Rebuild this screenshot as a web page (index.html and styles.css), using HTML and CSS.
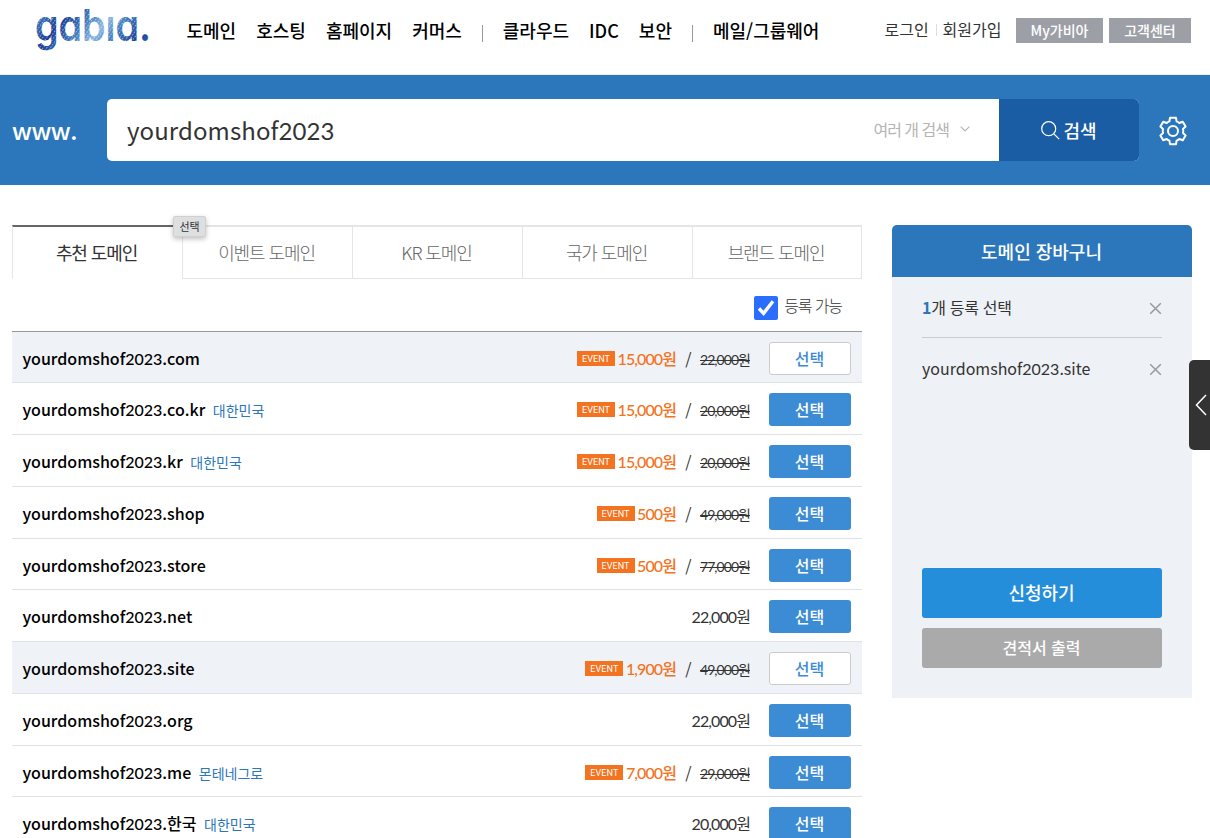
FILE: index.html
```html
<!DOCTYPE html>
<html lang="ko">
<head>
    <meta charset="UTF-8">
    <meta name="viewport" content="width=device-width, initial-scale=1.0">
    <title>도메인 검색</title>
    <link rel="stylesheet" href="styles.css">
</head>
<body>

<header class="header">
    <a class="logo" href="#">
        <svg width="120" height="56" viewBox="0 0 120 56">
            <defs>
                <linearGradient id="logoBlue" x1="0" y1="0" x2="28" y2="22" gradientUnits="userSpaceOnUse" spreadMethod="reflect">
                    <stop offset="0" stop-color="#8bb9e2"/>
                    <stop offset="0.45" stop-color="#3d78bd"/>
                    <stop offset="1" stop-color="#1c3f94"/>
                </linearGradient>
                <pattern id="logoDots" width="3" height="3" patternUnits="userSpaceOnUse" patternTransform="rotate(35)">
                    <rect width="1" height="1.4" fill="#fff" opacity="0.6"/>
                </pattern>
            </defs>
            <text class="logo-text" x="3" y="41" textLength="116" lengthAdjust="spacingAndGlyphs" fill="url(#logoBlue)">gabıa.</text>
            <rect width="108" height="56" fill="url(#logoDots)"/>
        </svg>
    </a>
    <nav class="nav">
        <a href="#">도메인</a>
        <a href="#">호스팅</a>
        <a href="#">홈페이지</a>
        <a href="#">커머스</a>
        <span class="nav-bar"></span>
        <a href="#">클라우드</a>
        <a href="#">IDC</a>
        <a href="#">보안</a>
        <span class="nav-bar"></span>
        <a href="#">메일/그룹웨어</a>
    </nav>
    <div class="util">
        <a href="#">로그인</a>
        <span class="util-bar"></span>
        <a href="#">회원가입</a>
        <a class="util-btn my" href="#">My가비아</a>
        <a class="util-btn" href="#">고객센터</a>
    </div>
</header>

<section class="search">
    <span class="www">www.</span>
    <form class="search-form">
        <div class="search-value">yourdomshof<span class="num">2023</span></div>
        <div class="multi">여러 개 검색
            <svg width="10" height="6" viewBox="0 0 10 6" fill="none" stroke="#b5b5b5" stroke-width="1.1"><path d="M.6.6 5 5 9.4.6"/></svg>
        </div>
        <button type="button" class="search-btn">
            <svg width="19" height="19" viewBox="0 0 19 19" fill="none" stroke="#fff" stroke-width="1.2"><circle cx="7.7" cy="7.7" r="7"/><path d="m12.8 12.8 5.4 5.4"/></svg>
            검색
        </button>
    </form>
    <svg class="gear" width="28" height="30" viewBox="0 0 28 30" fill="none" stroke="#fff" stroke-width="2" stroke-linejoin="round">
        <path d="M11 1.800h6l.6 3.600q1.400.4 2.700 1.600l3.500-1.200 2.800 4.800-2.600 2.300q.6 2.100 0 4.200l2.600 2.300-2.800 4.800-3.500-1.200q-1.300 1.200-2.700 1.600l-.6 3.600h-6l-.6-3.600Q9 24.200 7.700 23l-3.500 1.200-2.800-4.800L4 17.100q-.6-2.100 0-4.200l-2.600-2.300 2.800-4.800L7.700 7Q9 5.800 10.400 5.400z"/>
        <circle cx="14" cy="15" r="5"/>
    </svg>
</section>

<main class="main">
    <section class="result">
        <div class="tabs">
            <a class="tab active" href="#">추천 도메인<span class="tip">선택</span></a>
            <a class="tab" href="#">이벤트 도메인</a>
            <a class="tab" href="#">KR 도메인</a>
            <a class="tab" href="#">국가 도메인</a>
            <a class="tab" href="#">브랜드 도메인</a>
        </div>
        <div class="filter">
            <span class="check">
                <svg width="24" height="24" viewBox="0 0 24 24" fill="none" stroke="#fff" stroke-width="3.4"><path d="m5 12.500 4.600 4.800L19 5.300"/></svg>
            </span>
            <span class="filter-label">등록 가능</span>
        </div>
        <ul class="list">
            <li class="row picked">
                <span class="name">yourdomshof<span class="num">2023</span>.com</span>
                <span class="event">EVENT</span><span class="sale">15,000원</span><span class="slash">/</span><del>22,000원</del>
                <button type="button" class="pick">선택</button>
            </li>
            <li class="row">
                <span class="name">yourdomshof<span class="num">2023</span>.co.kr<em>대한민국</em></span>
                <span class="event">EVENT</span><span class="sale">15,000원</span><span class="slash">/</span><del>20,000원</del>
                <button type="button" class="pick">선택</button>
            </li>
            <li class="row">
                <span class="name">yourdomshof<span class="num">2023</span>.kr<em>대한민국</em></span>
                <span class="event">EVENT</span><span class="sale">15,000원</span><span class="slash">/</span><del>20,000원</del>
                <button type="button" class="pick">선택</button>
            </li>
            <li class="row">
                <span class="name">yourdomshof<span class="num">2023</span>.shop</span>
                <span class="event">EVENT</span><span class="sale">500원</span><span class="slash">/</span><del>49,000원</del>
                <button type="button" class="pick">선택</button>
            </li>
            <li class="row">
                <span class="name">yourdomshof<span class="num">2023</span>.store</span>
                <span class="event">EVENT</span><span class="sale">500원</span><span class="slash">/</span><del>77,000원</del>
                <button type="button" class="pick">선택</button>
            </li>
            <li class="row">
                <span class="name">yourdomshof<span class="num">2023</span>.net</span>
                <span class="price">22,000원</span>
                <button type="button" class="pick">선택</button>
            </li>
            <li class="row picked">
                <span class="name">yourdomshof<span class="num">2023</span>.site</span>
                <span class="event">EVENT</span><span class="sale">1,900원</span><span class="slash">/</span><del>49,000원</del>
                <button type="button" class="pick">선택</button>
            </li>
            <li class="row">
                <span class="name">yourdomshof<span class="num">2023</span>.org</span>
                <span class="price">22,000원</span>
                <button type="button" class="pick">선택</button>
            </li>
            <li class="row">
                <span class="name">yourdomshof<span class="num">2023</span>.me<em>몬테네그로</em></span>
                <span class="event">EVENT</span><span class="sale">7,000원</span><span class="slash">/</span><del>29,000원</del>
                <button type="button" class="pick">선택</button>
            </li>
            <li class="row">
                <span class="name">yourdomshof<span class="num">2023</span>.한국<em>대한민국</em></span>
                <span class="price">20,000원</span>
                <button type="button" class="pick">선택</button>
            </li>
        </ul>
    </section>

    <aside class="cart">
        <h2>도메인 장바구니</h2>
        <div class="cart-body">
            <div class="cart-count">
                <span><b>1</b>개 등록 선택</span>
                <svg class="close" width="13" height="13" viewBox="0 0 13 13" stroke="#999" stroke-width="1.5"><path d="m1.200 1.200 10.600 10.600M11.800 1.200 1.200 11.800"/></svg>
            </div>
            <div class="cart-item">
                <span>yourdomshof<span class="num">2023</span>.site</span>
                <svg class="close" width="13" height="13" viewBox="0 0 13 13" stroke="#999" stroke-width="1.5"><path d="m1.200 1.200 10.600 10.600M11.800 1.200 1.200 11.800"/></svg>
            </div>
            <button type="button" class="apply">신청하기</button>
            <button type="button" class="estimate">견적서 출력</button>
        </div>
    </aside>
</main>

<a class="side-open" href="#">
    <svg width="12" height="22" viewBox="0 0 12 22" fill="none" stroke="#fff" stroke-width="1.5"><path d="M11 1 1.500 11 11 21"/></svg>
</a>

</body>
</html>
```
FILE: styles.css
```css
* {
    margin: 0;
    padding: 0;
    box-sizing: border-box;
}

body {
    height: 838px;
    overflow: hidden;
    background: #fff;
    color: #333;
    font-family: "Noto Sans CJK KR", sans-serif;
    font-size: 16px;
    line-height: 24px;
}

a {
    color: inherit;
    text-decoration: none;
}

button {
    border: none;
    font-family: inherit;
    cursor: pointer;
}

.num {
    font-family: Lato, sans-serif;
}

/* 상단 메뉴 */
.header {
    display: flex;
    height: 75px;
    padding: 0 19px 0 32px;
    border-bottom: 1px solid #eee;
}

.logo {
    width: 154.5px;
}

.logo svg {
    display: block;
    overflow: visible;
}

.logo-text {
    font-family: Inter, sans-serif;
    font-feature-settings: "cv11";
    font-size: 44px;
    font-weight: 600;
}

.nav {
    display: flex;
    gap: 20px;
    height: 24px;
    margin-top: 18px;
    color: #000;
    font-size: 18px;
    font-weight: 500;
    white-space: nowrap;
}

.nav-bar {
    width: 1px;
    height: 17px;
    margin-top: 7px;
    background: #999;
}

.util {
    display: flex;
    height: 25px;
    margin: 18px 0 0 auto;
    line-height: 23px;
    white-space: nowrap;
}

.util-bar {
    width: 1px;
    height: 12px;
    margin: 6px 6px 0 7px;
    background: #ddd;
}

.util-btn {
    width: 82px;
    margin-left: 6px;
    background: #9d9fa7;
    color: #fff;
    font-size: 14px;
    font-weight: 500;
    line-height: 25px;
    text-align: center;
}

.util-btn.my {
    width: 87px;
    margin-left: 14.5px;
}

/* 검색창 */
.search {
    display: flex;
    align-items: center;
    height: 110px;
    padding: 0 23px 0 12px;
    background: #2c77bb;
}

.www {
    width: 95px;
    color: #fff;
    font-size: 24px;
    font-weight: 500;
    letter-spacing: -0.5px;
    line-height: 36px;
}

.search-form {
    display: flex;
    align-items: center;
    width: 1032px;
    height: 62px;
    overflow: hidden;
    border-radius: 5px;
    background: #fff;
}

.search-value {
    flex: 1;
    padding-left: 20px;
    font-size: 24px;
    letter-spacing: 0.1px;
    line-height: 36px;
}

.multi {
    display: flex;
    align-items: center;
    gap: 11px;
    margin: -2px 29px 0 0;
    color: #b5b5b5;
    letter-spacing: -1px;
}

.search-btn {
    display: flex;
    align-items: center;
    justify-content: center;
    gap: 3px;
    width: 140px;
    height: 62px;
    background: #1b5da5;
    color: #fff;
    font-size: 18px;
    font-weight: 500;
}

.gear {
    margin: 1px 0 0 20px;
}

.main {
    display: flex;
    align-items: flex-start;
    gap: 30px;
    padding: 40px 18px 0 12px;
}

.result {
    width: 850px;
}

/* 탭 */
.tabs {
    display: grid;
    grid-template-columns: repeat(5, 170px);
    height: 54px;
}

.tab {
    position: relative;
    padding-right: 2px;
    border: 1px solid #e5e5e5;
    border-width: 2px 0 1px 1px;
    color: #666;
    font-size: 18px;
    font-weight: 300;
    letter-spacing: -1.1px;
    line-height: 51px;
    text-align: center;
}

.tab:last-child {
    border-right-width: 1px;
}

.tab.active {
    border-top-color: #666;
    border-bottom-color: transparent;
    color: #333;
    font-weight: 400;
}

.tip {
    position: absolute;
    z-index: 1;
    top: -11px;
    left: 160px;
    width: 33px;
    height: 21px;
    border: 1px solid #d0d0d0;
    border-radius: 2px;
    background: #dedfe1;
    box-shadow: 0 2px 5px rgba(0, 0, 0, 0.25);
    font-size: 11px;
    letter-spacing: -0.2px;
    line-height: 18px;
}

.filter {
    display: flex;
    gap: 6px;
    height: 51.5px;
    padding: 17px 20px 0 0;
    justify-content: flex-end;
}

.check {
    width: 24px;
    height: 24px;
    border-radius: 2px;
    background: #2b6dff;
}

.check svg {
    display: block;
}

.filter-label {
    font-weight: 300;
    letter-spacing: -1.1px;
    line-height: 18px;
}

/* 도메인 목록 */
.list {
    border-top: 1px solid #999;
    list-style: none;
}

.row {
    display: flex;
    height: 51.75px;
    padding: 10px 11px 0 10.5px;
    border-bottom: 1px solid #e0e2e5;
    line-height: 34px;
}

.row.picked {
    background: #eff2f7;
}

.name {
    flex: 1;
    color: #000;
    font-weight: 500;
    line-height: 33.4px;
}

.name em {
    margin-left: 7.5px;
    color: #2c77bb;
    font-size: 14px;
    font-style: normal;
    font-weight: 400;
}

.event {
    width: 38px;
    height: 15px;
    margin: 9px 2.5px 0 0;
    background: #f37321;
    color: #fff;
    font-family: Roboto, sans-serif;
    font-size: 9px;
    letter-spacing: 0.1px;
    line-height: 16px;
    text-align: center;
}

.sale,
.price,
.row del {
    font-family: Lato, "Noto Sans CJK KR", sans-serif;
    letter-spacing: -0.9px;
}

.sale {
    color: #f37321;
    font-weight: 500;
}

.slash {
    width: 24px;
    padding-left: 1px;
    text-align: center;
}

.row del {
    font-size: 14px;
    letter-spacing: -0.95px;
    line-height: 35px;
}

.pick {
    width: 82px;
    height: 33px;
    margin-left: 19px;
    padding-right: 1px;
    border-radius: 3px;
    background: #3c8bd5;
    color: #fff;
    font-size: 16px;
    font-weight: 500;
    line-height: 31px;
}

.picked .pick {
    border: 1px solid #ccc;
    background: #fff;
    color: #3c8bd5;
}

/* 장바구니 */
.cart {
    width: 300px;
    height: 473px;
    background: #eef1f6;
    border-radius: 5px 5px 0 0;
}

.cart h2 {
    height: 52px;
    padding-right: 1px;
    border-radius: 5px 5px 0 0;
    background: #2c77bb;
    color: #fff;
    font-size: 18px;
    font-weight: 500;
    line-height: 52px;
    text-align: center;
}

.cart-body {
    display: flex;
    flex-direction: column;
    height: 421px;
    padding: 0 30px 30px;
}

.cart-count,
.cart-item {
    display: flex;
    align-items: center;
    justify-content: space-between;
    height: 61px;
    border-bottom: 1px solid #ccc;
}

.cart-count {
    letter-spacing: -0.3px;
}

.cart-item {
    height: 60px;
    border-bottom: none;
}

.cart-count b {
    color: #2c77bb;
}

.close {
    margin-top: 2px;
}

.apply,
.estimate {
    padding: 0 1px 2px 0;
    background: #258eda;
    border-radius: 3px;
    color: #fff;
    font-weight: 500;
}

.apply {
    height: 50px;
    margin-top: auto;
    font-size: 18px;
}

.estimate {
    height: 40px;
    margin-top: 10px;
    background: #aaa;
    font-size: 16px;
}

/* 오른쪽 열기 버튼 */
.side-open {
    position: absolute;
    top: 360px;
    right: 0;
    display: flex;
    align-items: center;
    width: 21px;
    height: 90px;
    padding-left: 6px;
    border-radius: 5px 0 0 5px;
    background: #333;
}
```
